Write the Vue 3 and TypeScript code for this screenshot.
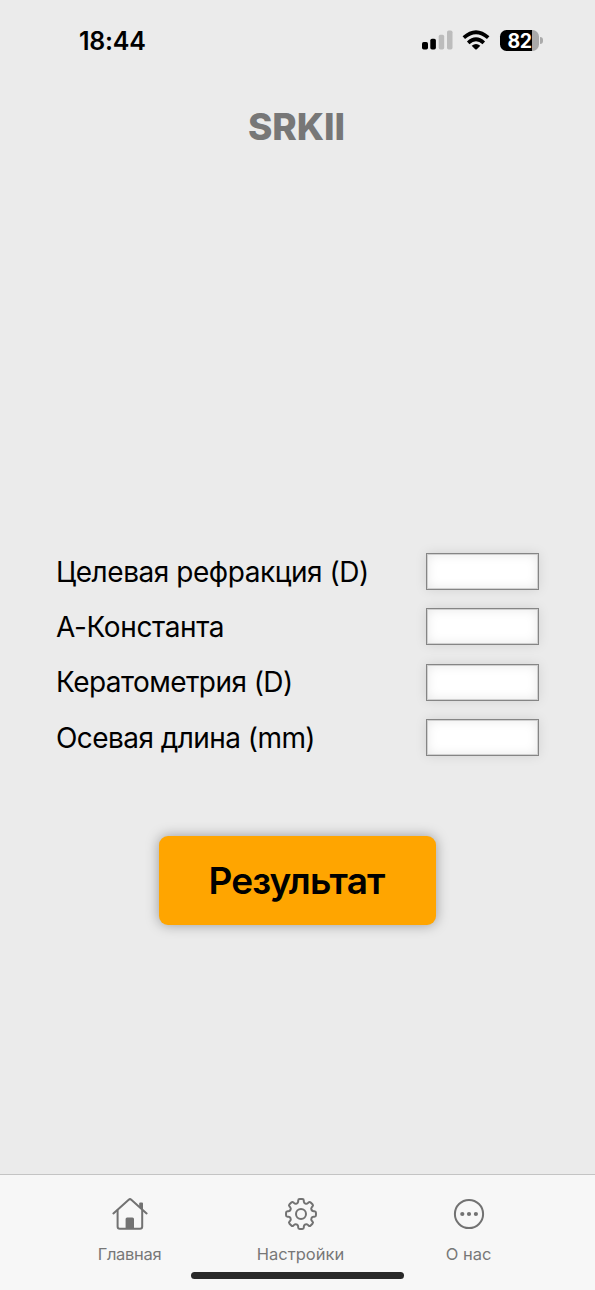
<script setup lang="ts">
import { ref } from 'vue'

interface Field {
  id: string
  label: string
}

const fields: Field[] = [
  { id: 'refraction', label: 'Целевая рефракция (D)' },
  { id: 'constant', label: 'А-Константа' },
  { id: 'keratometry', label: 'Кератометрия (D)' },
  { id: 'axial', label: 'Осевая длина (mm)' },
]
const values = ref<Record<string, string>>({})

// Outline of an eight-toothed gear with softened corners, centred on (17, 17).
function gearPath(): string {
  const pts: [number, number][] = []
  for (let i = 0; i < 8; i++) {
    const profile: [number, number][] = [[-14.5, 11.4], [-10.5, 15.2], [10.5, 15.2], [14.5, 11.4]]
    for (const [offset, r] of profile) {
      const a = ((i * 45 + offset) * Math.PI) / 180
      pts.push([17 + r * Math.sin(a), 17 - r * Math.cos(a)])
    }
  }
  const toward = (a: [number, number], b: [number, number], d: number) => {
    const t = d / Math.hypot(b[0] - a[0], b[1] - a[1])
    return `${(a[0] + (b[0] - a[0]) * t).toFixed(2)} ${(a[1] + (b[1] - a[1]) * t).toFixed(2)}`
  }
  return pts
    .map((p, i) => {
      const prev = pts[(i + pts.length - 1) % pts.length]
      const next = pts[(i + 1) % pts.length]
      return `${i ? 'L' : 'M'}${toward(p, prev, 1.5)}Q${p[0].toFixed(2)} ${p[1].toFixed(2)} ${toward(p, next, 1.5)}`
    })
    .join('') + 'Z'
}
const gear = gearPath()
</script>

<template>
  <div class="screen">
    <header class="status">
      <span class="time">18:44</span>
      <div class="indicators">
        <svg class="signal" width="31" height="20" viewBox="0 0 31 20">
          <rect x="0" y="12" width="6" height="7.5" rx="1.7" />
          <rect x="8.3" y="8.8" width="5.6" height="10.7" rx="1.7" />
          <rect class="dim" x="16.7" y="4.8" width="5.5" height="14.7" rx="1.7" />
          <rect class="dim" x="25" y="0.5" width="5.5" height="19" rx="1.7" />
        </svg>
        <svg class="wifi" width="28" height="20" viewBox="0 0 28 20">
          <path d="M1.8 7.7 Q14 -3.2 26.2 7.7" />
          <path d="M6.2 12.8 Q14 5.6 21.8 12.8" />
          <path class="solid" d="M9.7 15.7 Q14 12.1 18.3 15.7 L14.8 19.2 Q14 20 13.2 19.2 Z" />
        </svg>
        <div class="battery"><span>82</span></div>
        <i class="cap"></i>
      </div>
    </header>
    <h1>SRKII</h1>
    <main>
      <form @submit.prevent>
        <label v-for="field in fields" :key="field.id" class="row">
          <span :class="['label', field.id]">{{ field.label }}</span>
          <input v-model="values[field.id]" type="text" inputmode="decimal" />
        </label>
        <button type="submit"><span>Результат</span></button>
      </form>
    </main>
    <nav>
      <a class="tab home">
        <svg width="36" height="34" viewBox="0 0 36 34">
          <path d="M1.4 16.4 L16.7 2.7 Q18 1.6 19.3 2.7 L34.6 16.4" />
          <path d="M5.6 13.5V29.5Q5.6 31.7 7.8 31.7H28Q30.2 31.7 30.2 29.5V13.5" />
          <path class="solid" d="M13.6 31V22Q13.6 20.5 15.1 20.5H20.5Q22 20.5 22 22V31ZM27.2 10.2V6.5Q27.2 5.5 28.2 5.5H30Q31 5.5 31 6.5V13.3Z" />
        </svg>
        <span>Главная</span>
      </a>
      <a class="tab settings">
        <svg width="34" height="34" viewBox="0 0 34 34">
          <path :d="gear" />
          <circle cx="17" cy="17" r="5" />
        </svg>
        <span>Настройки</span>
      </a>
      <a class="tab about">
        <svg width="34" height="34" viewBox="0 0 34 34">
          <circle cx="17" cy="17" r="14.1" />
          <g class="solid">
            <circle cx="10.3" cy="17" r="2.1" />
            <circle cx="17" cy="17" r="2.1" />
            <circle cx="23.9" cy="17" r="2.1" />
          </g>
        </svg>
        <span>О нас</span>
      </a>
      <i class="grabber"></i>
    </nav>
  </div>
</template>

<style>
body {
  margin: 0;
  background: #ebebeb;
}
</style>

<style scoped>
.screen {
  display: flex;
  flex-direction: column;
  box-sizing: border-box;
  width: 595px;
  height: 1290px;
  overflow: hidden;
  background: #ebebeb;
  color: #000;
  font-family: Inter, "Liberation Sans", sans-serif;
}
.status {
  display: flex;
  justify-content: space-between;
  box-sizing: border-box;
  height: 82px;
  padding: 26px 52.5px 0 79px;
}
.time {
  font-size: 25px;
  font-weight: 600;
  line-height: 30px;
  letter-spacing: -0.25px;
}
.indicators {
  display: flex;
  align-items: flex-start;
  padding-top: 4px;
}
.signal .dim {
  fill: #bcbcbc;
}
.wifi {
  margin-left: 9px;
}
.wifi path {
  fill: none;
  stroke: #000;
  stroke-width: 3.7;
}
.wifi .solid {
  fill: #000;
  stroke: none;
}
.battery {
  width: 39px;
  height: 21px;
  margin-left: 10px;
  border-radius: 6.5px;
  background: linear-gradient(90deg, #000 32.5px, #a9a9a9 32.5px);
  color: #fff;
  font-size: 19.5px;
  font-weight: 700;
  line-height: 22px;
  text-align: center;
  letter-spacing: -0.4px;
}
.cap {
  width: 2.5px;
  height: 7px;
  margin: 7px 0 0 1px;
  border-radius: 0 3px 3px 0;
  background: #aaa;
}
h1 {
  height: 48px;
  margin: 20px 0 0;
  padding-right: 2px;
  color: #777;
  font-size: 37px;
  font-weight: 800;
  line-height: 49px;
  text-align: center;
  letter-spacing: -0.1px;
}
main {
  flex: 1;
  padding: 403px 56px 0 56px;
}
form {
  display: flex;
  flex-direction: column;
  gap: 17.6px;
}
.row {
  display: flex;
  align-items: center;
  justify-content: space-between;
  height: 37.6px;
}
.label {
  padding-top: 1.4px;
  font-size: 28px;
  line-height: 37px;
  white-space: nowrap;
}
.refraction {
  letter-spacing: -0.45px;
}
.constant {
  letter-spacing: -0.38px;
}
.keratometry {
  letter-spacing: -0.56px;
}
.axial {
  letter-spacing: -0.56px;
}
input {
  box-sizing: border-box;
  width: 113px;
  height: 37px;
  padding: 4px 8px;
  border: 1px solid #858585;
  border-radius: 0;
  outline: none;
  background: #fff;
  box-shadow: 0 0 12px rgba(0, 0, 0, 0.1), inset 0 0 0 1px #d0d0d0,
    inset 0 0 12px rgba(0, 0, 0, 0.1);
  font: 24px Inter, sans-serif;
}
button {
  align-self: center;
  width: 277px;
  height: 89px;
  margin-top: 61.8px;
  padding: 0 2px 0 0;
  border: 0;
  border-radius: 9px;
  background: #ffa500;
  box-shadow: 0 0 13px rgba(0, 0, 0, 0.35);
  color: #000;
  font: 600 37px/89px Inter, sans-serif;
  letter-spacing: -0.9px;
}
nav {
  position: relative;
  display: grid;
  grid-template-columns: 171px 171px 165px;
  box-sizing: border-box;
  height: 116px;
  padding: 22px 44px 0;
  border-top: 1px solid #c4c4c4;
  background: #f7f7f7;
}
.tab {
  display: flex;
  flex-direction: column;
  align-items: center;
  gap: 12px;
  color: #777;
  font-size: 16.5px;
  line-height: 22px;
  white-space: nowrap;
}
.home {
  letter-spacing: -0.3px;
}
.tab svg {
  fill: none;
  stroke: #727272;
  stroke-width: 2;
  stroke-linecap: round;
  stroke-linejoin: round;
}
.tab .solid {
  fill: #727272;
  stroke: none;
}
.grabber {
  position: absolute;
  bottom: 11px;
  left: 191px;
  width: 213px;
  height: 7px;
  border-radius: 4px;
  background: #282828;
}
</style>
